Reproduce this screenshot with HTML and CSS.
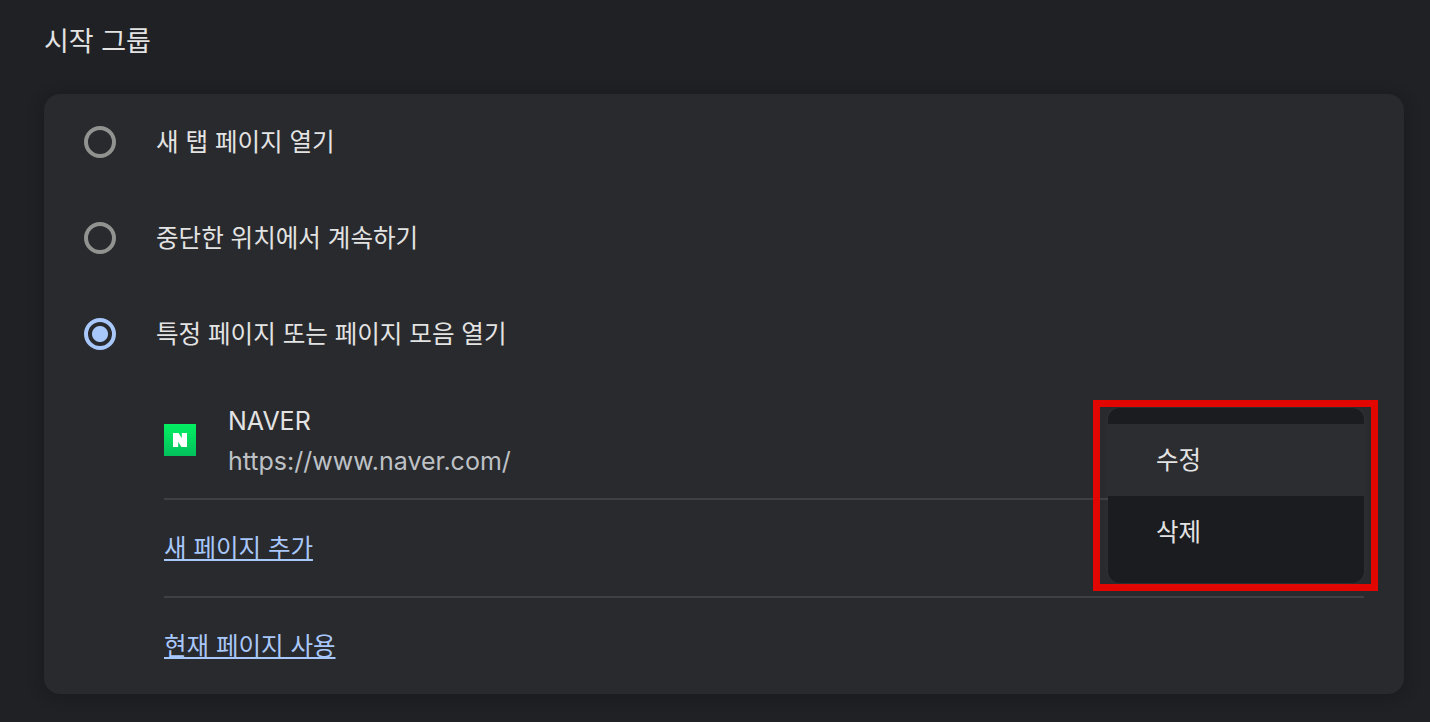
FILE: index.html
```html
<!DOCTYPE html>
<html lang="ko">
<head>
<meta charset="utf-8">
<title>시작 그룹</title>
<link rel="stylesheet" href="styles.css">
</head>
<body>
<main class="page">
  <h2 class="title">시작 그룹</h2>
  <section class="card">
    <div class="option"><span class="radio"></span><span class="label">새 탭 페이지 열기</span></div>
    <div class="option"><span class="radio"></span><span class="label">중단한 위치에서 계속하기</span></div>
    <div class="option"><span class="radio checked"></span><span class="label">특정 페이지 또는 페이지 모음 열기</span></div>
    <div class="pages">
      <div class="site">
        <svg class="favicon" viewBox="0 0 32 32" aria-hidden="true">
          <defs><linearGradient id="g" x1="0" y1="0" x2="0" y2="1"><stop offset="0" stop-color="#03ef62"/><stop offset="1" stop-color="#03c15c"/></linearGradient></defs>
          <rect width="32" height="32" fill="url(#g)"/>
          <path d="M9 9h5.6l3.2 5.2V9H23v14h-5.6l-3.2-5.2V23H9z" fill="#fff"/>
        </svg>
        <div class="site-text">
          <div class="site-name">NAVER</div>
          <div class="site-url">https://www.naver.com/</div>
        </div>
      </div>
      <div class="link-row"><a class="link" href="#">새 페이지 추가</a></div>
      <div class="link-row"><a class="link" href="#">현재 페이지 사용</a></div>
    </div>
  </section>
  <div class="highlight">
    <div class="menu">
      <div class="menu-item hover">수정</div>
      <div class="menu-item">삭제</div>
    </div>
  </div>
</main>
</body>
</html>
```
FILE: styles.css
```css
* { box-sizing: border-box; }
html, body { margin: 0; height: 100%; }
body {
  background: #202124;
  color: #e3e3e3;
  font-family: "Noto Sans CJK KR", Inter, sans-serif;
  overflow: hidden;
}
.page { position: relative; width: 1430px; height: 722px; padding: 0 26px 0 44px; }
.title {
  margin: 0;
  height: 94px;
  padding-top: 21px;
  font-size: 27px;
  line-height: 38px;
  font-weight: 400;
}
.card {
  height: 600px;
  background: #292a2d;
  border-radius: 16px;
  box-shadow: 0 2px 12px 6px rgba(0,0,0,.12);
}
.option {
  height: 96px;
  padding-left: 40px;
  display: flex;
  align-items: center;
  gap: 40px;
  font-size: 24.55px;
}
.label { margin-top: -3px; }
.radio {
  width: 32px;
  height: 32px;
  border: 4px solid #909390;
  border-radius: 50%;
  flex: none;
}
.radio.checked {
  border-color: #a8c7fa;
  background: radial-gradient(circle, #a8c7fa 0 7.5px, transparent 8.5px);
}
.pages { margin: 0 40px 0 120px; }
.site {
  height: 118px;
  display: flex;
  align-items: center;
  gap: 32px;
  border-bottom: 2px solid #3f4043;
}
.favicon { width: 32px; height: 32px; flex: none; }
.site-text { padding-top: 2px; }
.site-name { font-family: Inter, sans-serif; font-size: 25px; line-height: 40px; }
.site-url { font-family: Inter, sans-serif; font-size: 25px; line-height: 40px; color: #bdc1c6; }
.link-row {
  height: 96px;
  display: flex;
  align-items: center;
  font-size: 24.5px;
}
.link-row + .link-row { height: 98px; border-top: 2px solid #3f4043; }
.link { color: #a8c7fa; text-decoration: underline; margin-top: -3px; }
.highlight {
  position: absolute;
  left: 1093px;
  top: 400px;
  width: 285px;
  height: 191px;
  border: 7px solid #e10600;
  padding: 1px 7px 1px 8px;
}
.menu {
  height: 175px;
  padding: 16px 0;
  background: #1b1c1f;
  border-radius: 12px;
  box-shadow: 0 0 8px rgba(255,255,255,.04);
}
.menu-item {
  height: 72px;
  padding: 0 0 3px 48px;
  display: flex;
  align-items: center;
  font-size: 24.5px;
}
.menu-item.hover { background: #2c2d31; }
```
